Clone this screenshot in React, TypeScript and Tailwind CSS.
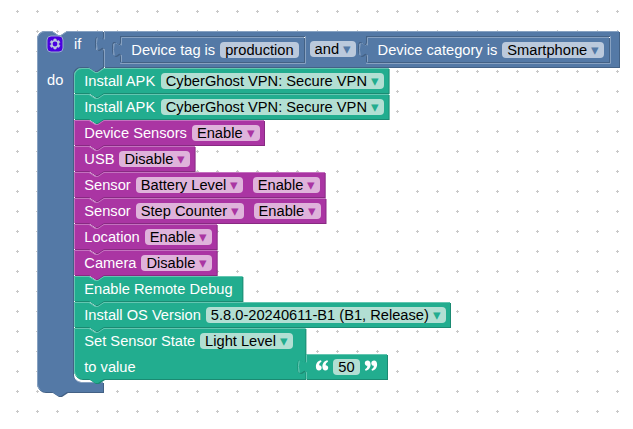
import type { ReactNode } from "react";

type Tone = "logic" | "action" | "sensor";

const TONES: Record<Tone, { main: string; light: string; dark: string; arrow: string; field: string }> = {
  logic: { main: "fill-[#5479a6]", light: "stroke-[#87a1c1]", dark: "fill-[#436185]", arrow: "text-[#5479a6]", field: "bg-[#bbc9dc]" },
  action: { main: "fill-[#22ad8f]", light: "stroke-[#64c6b1]", dark: "fill-[#1b8a72]", arrow: "text-[#22ad8f]", field: "bg-[#b2dfd3]" },
  sensor: { main: "fill-[#aa35a3]", light: "stroke-[#c472bf]", dark: "fill-[#882a82]", arrow: "text-[#aa35a3]", field: "bg-[#dfb3db]" },
};

const TAB_UP = "c 0,-10 -8,8 -8,-7.5 s 8,2.5 8,-7.5";
const TAB_DOWN = "c 0,10 -8,-8 -8,7.5 s 8,-2.5 8,7.5";

function Shape({ tone, path, light }: { tone: Tone; path: string; light: string }) {
  const t = TONES[tone];
  return (
    <svg className="absolute left-0 top-0 h-px w-px overflow-visible" aria-hidden="true">
      <path d={path} transform="translate(1,1)" fillRule="evenodd" className={t.dark} />
      <path d={path} fillRule="evenodd" className={t.main} />
      <path d={light} fill="none" strokeWidth="1" strokeLinecap="round" className={t.light} />
    </svg>
  );
}

function Label({ children }: { children: ReactNode }) {
  return <span className="h-4 text-white">{children}</span>;
}

function Field({ tone, children, menu = true }: { tone: Tone; children: ReactNode; menu?: boolean }) {
  return (
    <span className={`h-4 rounded-[4px] px-[5px] text-black ${TONES[tone].field}`}>
      {children}
      {menu && <span className={TONES[tone].arrow}>{"\u00a0▾"}</span>}
    </span>
  );
}

function Statement({
  tone,
  width,
  first,
  last,
  children,
}: {
  tone: Tone;
  width: number;
  first?: boolean;
  last?: boolean;
  children: ReactNode;
}) {
  const h = last ? 51 : 25;
  const start = first ? "M 0,8 a 8,8 0 0,1 8,-8" : "M 0,0";
  const side = last ? `V ${h} H 30 l -6,4 -3,0 -6,-4 H 8 a 8,8 0 0,1 -8,-8 z` : `V ${h} H 30 l -6,4 -3,0 -6,-4 H 0 z`;
  const right = last ? `V 31 ${TAB_DOWN} ${side}` : side;
  const path = `${start} H 15 l 6,4 3,0 6,-4 H ${width} ${right}`;
  const edge = last ? `M 2.7,${h - 2.7} A 7.5,7.5 0 0,1 0.5,${h - 8}` : `M 0.5,${h - 0.5}`;
  const corner = first ? "V 8 A 7.5,7.5 0 0,1 8,0.5" : "V 0.5";
  const tab = last ? `M ${width - 5},45.4 l 3.7,-1.6` : "";
  return (
    <div className={last ? "relative h-[52px]" : "relative h-[26px]"}>
      <Shape tone={tone} path={path} light={`${edge} ${corner} H 15 l 6,4 3,0 6,-4 H ${width - 0.5} ${tab}`} />
      <div className="relative">{children}</div>
    </div>
  );
}

function Row({ children }: { children: ReactNode }) {
  return <div className="flex h-[26px] gap-[5px] pl-[10.3px] pt-[5px]">{children}</div>;
}

function Value({ tone, width, children }: { tone: Tone; width: number; children: ReactNode }) {
  return (
    <div className="relative h-[26px] shrink-0" style={{ width }}>
      <Shape
        tone={tone}
        path={`M 0,0 H ${width} V 25 H 0 V 20 ${TAB_UP} z`}
        light={`M 0.5,24.5 V 18.5 m -7.36,-0.5 q -1.52,-5.5 0,-11 m 7.36,1 V 0.5 H ${width - 0.5}`}
      />
      <div className="relative">
        <Row>{children}</Row>
      </div>
    </div>
  );
}

function Gear() {
  return (
    <svg width="16" height="16" className="shrink-0 overflow-visible" aria-label="Settings">
      <rect width="16" height="16" rx="4" className="fill-[#4a00e0] stroke-[#98a9cf]" />
      <path
        className="fill-[#bac6dd]"
        d="m4.203,7.296 0,1.368 -0.92,0.677 -0.11,0.41 0.9,1.559 0.41,0.11 1.043,-0.457 1.187,0.683 0.127,1.134 0.3,0.3 1.8,0 0.3,-0.299 0.127,-1.138 1.185,-0.682 1.046,0.458 0.409,-0.11 0.9,-1.559 -0.11,-0.41 -0.92,-0.677 0,-1.366 0.92,-0.677 0.11,-0.41 -0.9,-1.559 -0.409,-0.109 -1.046,0.458 -1.185,-0.682 -0.127,-1.138 -0.3,-0.299 -1.8,0 -0.3,0.3 -0.126,1.135 -1.187,0.682 -1.043,-0.457 -0.41,0.11 -0.899,1.559 0.108,0.409z"
        stroke="#bac6dd"
        strokeWidth="0.5"
      />
      <circle cx="8" cy="8" r="2.4" className="fill-[#4a00e0]" />
    </svg>
  );
}

function Quote({ open }: { open?: boolean }) {
  return (
    <svg width="12" height="12" viewBox="0 0 12 12" className="mt-[0.5px] shrink-0 overflow-visible" aria-hidden="true">
      <g transform={open ? undefined : "rotate(180 6 5.5)"} className="fill-white">
        <path d="M5,0.3 C2,0.8 -0.1,3.2 -0.1,6.6 C-0.1,9.2 1.1,10.5 2.9,10.5 C4.6,10.5 5.7,9.4 5.7,7.8 C5.7,6.3 4.7,5.2 3.2,5.2 C3.1,3.8 3.8,2.6 5.5,1.7 z" />
        <path d="M11.5,0.3 C8.5,0.8 6.4,3.2 6.4,6.6 C6.4,9.2 7.6,10.5 9.4,10.5 C11.1,10.5 12.2,9.4 12.2,7.8 C12.2,6.3 11.2,5.2 9.7,5.2 C9.6,3.8 10.3,2.6 12,1.7 z" />
      </g>
    </svg>
  );
}

function Grid() {
  return (
    <svg className="absolute inset-0 h-full w-full" aria-hidden="true">
      <defs>
        <pattern id="grid" width="20" height="20" patternUnits="userSpaceOnUse" x="7" y="1">
          <path d="M 9,10.5 h 3 M 10.5,9 v 3" className="stroke-[#c8c8c8]" />
        </pattern>
      </defs>
      <rect width="100%" height="100%" fill="url(#grid)" />
    </svg>
  );
}

const AND_PATH = `M 0,0 H 515 V 36 H 0 V 20 ${TAB_UP} z
  M 16,5 H 201 V 31 H 16 V 25 ${TAB_UP} z
  M 262,5 H 506 V 31 H 262 V 25 ${TAB_UP} z`;
const AND_LIGHT = `M 0.5,35.5 V 18.5 m -7.36,-0.5 q -1.52,-5.5 0,-11 m 7.36,1 V 0.5 H 514.5
  M 201.5,5.5 V 32.5 H 16.5 M 506.5,5.5 V 32.5 H 262.5
  M 11.5,25 l 3.7,-1.6 M 257.5,25 l 3.7,-1.6`;

function Condition() {
  return (
    <div className="relative h-[37px] w-[515px] shrink-0">
      <Shape tone="logic" path={AND_PATH} light={AND_LIGHT} />
      <div className="relative flex pl-[17px] pt-[6px]">
        <Value tone="logic" width={183}>
          <Label>Device tag is</Label>
          <Field tone="logic" menu={false}>production</Field>
        </Value>
        <div className="flex w-[63.3px] pl-[5.6px] pt-[4px]">
          <Field tone="logic">and</Field>
        </div>
        <Value tone="logic" width={242}>
          <Label>Device category is</Label>
          <Field tone="logic">Smartphone</Field>
        </Value>
      </div>
    </div>
  );
}

const ROOT_PATH = `M 0,8 a 8,8 0 0,1 8,-8 H 15 l 6,4 3,0 6,-4 H 66 V 5 ${TAB_DOWN} V 36
  H 66 l -6,4 -3,0 -6,-4 h -7 a 8,8 0 0,0 -8,8 V 343 a 8,8 0 0,0 8,8
  H 66 V 361 H 30 l -6,4 -3,0 -6,-4 H 8 a 8,8 0 0,1 -8,-8 z`;
const ROOT_LIGHT = `M 2.7,358.3 A 7.5,7.5 0 0,1 0.5,353 V 8 A 7.5,7.5 0 0,1 8,0.5 H 15 l 6,4 3,0 6,-4 H 65.5
  M 61,19.4 l 3.7,-1.6
  M 38.7,348.7 A 8.5,8.5 0 0,0 44,351.5 H 65.5`;

function InstallApk({ first }: { first?: boolean }) {
  return (
    <Statement tone="action" width={314.6} first={first}>
      <Row>
        <Label>Install APK</Label>
        <div className="pl-[0.6px]"><Field tone="action">CyberGhost VPN: Secure VPN</Field></div>
      </Row>
    </Statement>
  );
}

export default function App() {
  return (
    <div className="relative h-[429px] w-[633px] overflow-hidden whitespace-nowrap bg-white pl-[37px] pt-[31px] font-['Liberation_Sans',Arial,sans-serif] text-[14.667px] leading-4">
      <Grid />
      <div className="relative h-[366px] w-[583px]">
        <Shape tone="logic" path={ROOT_PATH} light={ROOT_LIGHT} />
        <div className="relative">
          <div className="flex h-[37px]">
            <div className="flex w-[67px] shrink-0 gap-[11px] pl-[10px] pt-[5px]">
              <Gear />
              <Label>if</Label>
            </div>
            <Condition />
          </div>
          <div className="flex">
            <div className="flex w-[37px] shrink-0 pl-[10px] pt-[4px]">
              <Label>do</Label>
            </div>
            <div className="flex flex-col">
              <InstallApk first />
              <InstallApk />
              <Statement tone="sensor" width={190}>
                <Row><Label>Device Sensors</Label><Field tone="sensor">Enable</Field></Row>
              </Statement>
              <Statement tone="sensor" width={120.6}>
                <Row><Label>USB</Label><Field tone="sensor">Disable</Field></Row>
              </Statement>
              <Statement tone="sensor" width={250.7}>
                <Row>
                  <Label>Sensor</Label>
                  <Field tone="sensor">Battery Level</Field>
                  <div className="pl-[4.4px]"><Field tone="sensor">Enable</Field></div>
                </Row>
              </Statement>
              <Statement tone="sensor" width={251.5}>
                <Row>
                  <Label>Sensor</Label>
                  <Field tone="sensor">Step Counter</Field>
                  <div className="pl-[4.4px]"><Field tone="sensor">Enable</Field></div>
                </Row>
              </Statement>
              <Statement tone="sensor" width={142.7}>
                <Row><Label>Location</Label><Field tone="sensor">Enable</Field></Row>
              </Statement>
              <Statement tone="sensor" width={142.7}>
                <Row><Label>Camera</Label><Field tone="sensor">Disable</Field></Row>
              </Statement>
              <Statement tone="action" width={168.4}>
                <Row><Label>Enable Remote Debug</Label></Row>
              </Statement>
              <Statement tone="action" width={376}>
                <Row><Label>Install OS Version</Label><Field tone="action">5.8.0-20240611-B1 (B1, Release)</Field></Row>
              </Statement>
              <Statement tone="action" width={231.4} last>
                <Row><Label>Set Sensor State</Label><Field tone="action">Light Level</Field></Row>
                <div className="flex">
                  <div className="w-[232px]"><Row><Label>to value</Label></Row></div>
                  <Value tone="action" width={81}>
                    <Quote open />
                    <Field tone="action" menu={false}>50</Field>
                    <Quote />
                  </Value>
                </div>
              </Statement>
            </div>
          </div>
        </div>
      </div>
    </div>
  );
}
